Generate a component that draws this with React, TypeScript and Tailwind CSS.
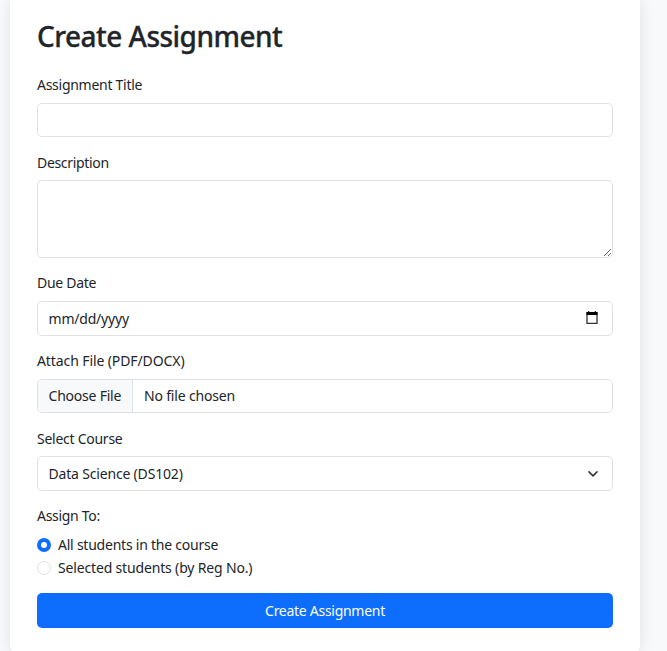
import React from 'react';

const label = 'block w-max h-[21px] leading-[21px]';
const box = 'block w-full rounded-[5px] border border-[#dee2e6] bg-white';

export default function App() {
  return (
    <div className="h-[651px] overflow-hidden bg-[#f8f9fa] pl-[10px] font-['Noto_Sans',sans-serif] text-[14px] text-[#212529]">
      <main className="h-[655px] w-[630px] rounded-b-[10px] bg-white px-[27px] pt-[19px] shadow-[0_0_15px_rgba(0,0,0,0.1)]">
        <h1 className="h-[34px] w-max text-[28px] font-medium leading-[34px] tracking-[-0.52px] [-webkit-text-stroke:0.3px_#212529]">Create Assignment</h1>
        <form className="pt-[21px]" onSubmit={(e) => e.preventDefault()}>
          <label htmlFor="title" className={`${label} tracking-[-0.27px]`}>Assignment Title</label>
          <input id="title" className={`${box} mt-[8px] h-[34px] px-[10.5px]`} />

          <label htmlFor="description" className={`${label} mt-[15px] tracking-[-0.32px]`}>Description</label>
          <textarea id="description" className={`${box} mt-[7px] h-[78px] resize-y px-[10.5px]`} />

          <label className={`${label} mt-[14px] tracking-[-0.3px]`}>Due Date</label>
          <div className={`${box} mt-[8px] flex h-[35px] items-center justify-between pl-[10.5px] pr-[14px]`}>
            <span className="leading-[21px] tracking-[-0.2px]">mm/dd/yyyy</span>
            <svg width="12" height="13" viewBox="0 0 12 13" className="relative -top-px">
              <path d="M1 2h10v10.5H1z" fill="none" stroke="#333" strokeWidth="1.3" />
              <path d="M.5 1h11v3H.5z" fill="#000" />
              <path d="M2 0h1.3v1H2zM8.7 0H10v1H8.7z" fill="#333" />
            </svg>
          </div>

          <label className={`${label} mt-[14px] tracking-[-0.1px]`}>Attach File (PDF/DOCX)</label>
          <div className={`${box} mt-[8px] flex h-[34px] overflow-hidden leading-[32px]`}>
            <span className="w-[95px] whitespace-nowrap border-r border-[#dee2e6] bg-[#f8f9fa] pl-[10.5px] tracking-[-0.22px]">Choose File</span>
            <span className="pl-[11px] tracking-[-0.18px]">No file chosen</span>
          </div>

          <label className={`${label} mt-[15px] tracking-[-0.26px]`}>Select Course</label>
          <div className={`${box} mt-[7px] flex h-[35px] items-center justify-between pl-[10.5px] pr-[13px]`}>
            <span className="leading-[21px] tracking-[-0.18px]">Data Science (DS102)</span>
            <svg width="12" height="12" viewBox="0 0 12 12" fill="none" stroke="#343a40" strokeWidth="1.6" strokeLinecap="round" strokeLinejoin="round">
              <path d="m2 3.9 4 4 4-4" />
            </svg>
          </div>

          <div className={`${label} mt-[14px] tracking-[-0.3px]`}>Assign To:</div>
          <label className="mt-[8px] flex h-[21px] w-max items-center gap-[7px] leading-[21px]">
            <span className="size-[14px] rounded-full border-4 border-[#0d6efd] bg-white" />
            <span className="tracking-[-0.23px]">All students in the course</span>
          </label>
          <label className="mt-[2px] flex h-[21px] w-max items-center gap-[7px] leading-[21px]">
            <span className="size-[14px] rounded-full border border-[#dee2e6] bg-white" />
            <span className="tracking-[-0.16px]">Selected students (by Reg No.)</span>
          </label>
          <button className="mt-[15px] h-[35px] w-full rounded-[5px] bg-[#0d6efd] leading-[35px] tracking-[-0.28px] text-white">Create Assignment</button>
        </form>
      </main>
    </div>
  );
}
